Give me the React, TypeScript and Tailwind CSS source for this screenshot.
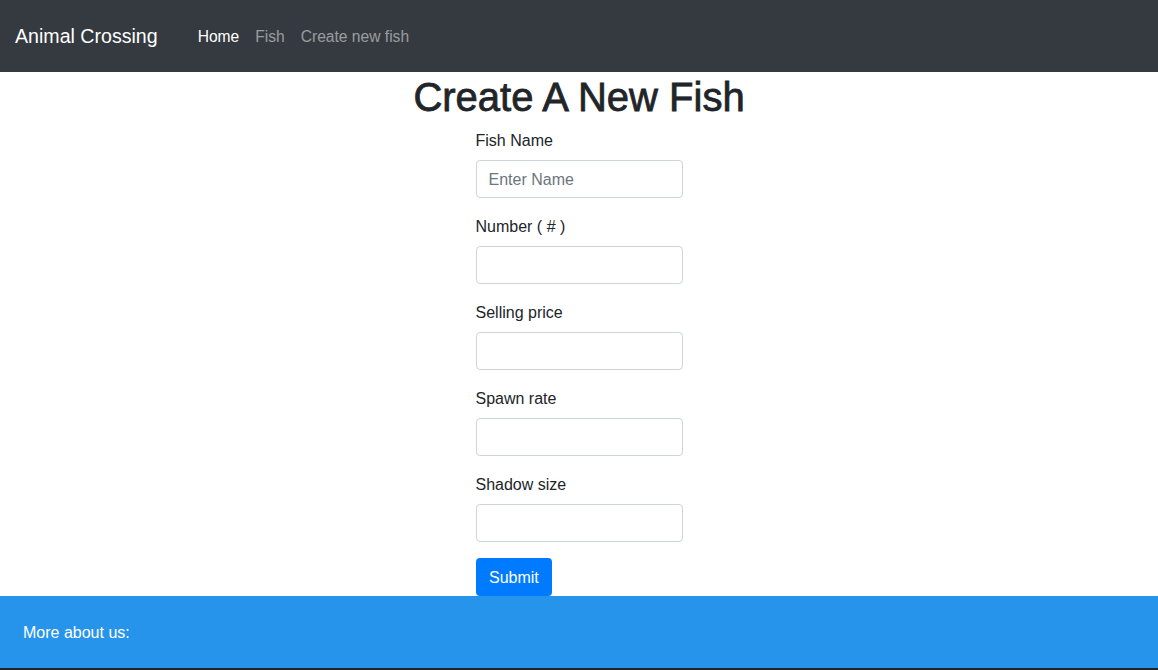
const font = { fontFamily: '"Liberation Sans", Arial, sans-serif' };

const fields = [
  { label: "Fish Name", placeholder: "Enter Name" },
  { label: "Number ( # )", placeholder: "" },
  { label: "Selling price", placeholder: "" },
  { label: "Spawn rate", placeholder: "" },
  { label: "Shadow size", placeholder: "" },
];

function Navbar() {
  return (
    <nav className="flex h-[72px] items-center bg-[#343a40] px-[15px]">
      <a href="#" className="mr-[40px] text-[19.6px] leading-[30px] text-white">
        Animal Crossing
      </a>
      <div className="flex gap-[16px] pt-[2px] text-[15.6px]">
        <a href="#" className="text-white">Home</a>
        <a href="#" className="text-white/50">Fish</a>
        <a href="#" className="text-white/50">Create new fish</a>
      </div>
    </nav>
  );
}

export default function App() {
  return (
    <div className="min-h-[670px] bg-white text-[#212529]" style={font}>
      <Navbar />
      <main className="flex flex-col items-center">
        <h1 className="mb-2 pt-[2px] text-[40px] leading-[46px] [-webkit-text-stroke:0.8px_#212529]">
          Create A New Fish
        </h1>
        <form className="w-[207px]" onSubmit={(e) => e.preventDefault()}>
          {fields.map((f) => (
            <div className="mb-4" key={f.label}>
              <label className="mb-2 block pt-[1px] text-[16px] leading-[23px]">{f.label}</label>
              <input
                type="text"
                placeholder={f.placeholder}
                className="block h-[38px] w-full rounded border border-[#ced4da] px-3 pt-[2px] text-[16px] placeholder:text-[#6c757d] focus:outline-none"
              />
            </div>
          ))}
          <button
            type="submit"
            className="h-[38px] rounded bg-[#007bff] px-[13.5px] pt-[2px] text-[16px] text-white"
          >
            Submit
          </button>
        </form>
      </main>
      <footer className="flex h-[72px] items-center bg-[#2794eb] px-[23px] pt-[2px] text-[16px] text-white">
        More about us:
      </footer>
      <div className="h-[2px] bg-[#212529]" />
    </div>
  );
}
